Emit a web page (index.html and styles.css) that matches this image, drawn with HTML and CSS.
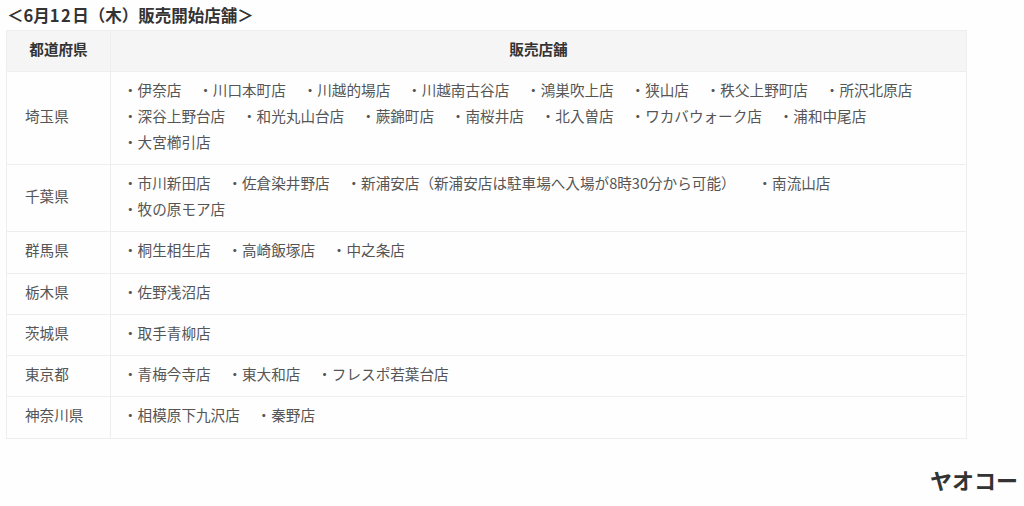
FILE: index.html
```html
<!DOCTYPE html>
<html lang="ja">
<head>
<meta charset="utf-8">
<title>6月12日（木）販売開始店舗</title>
<link rel="stylesheet" href="styles.css">
</head>
<body>
<main class="page">
  <h2 class="title">＜6月<span class="num">12</span>日（木）販売開始店舗＞</h2>
  <table class="stores">
    <thead>
      <tr><th class="pref-col">都道府県</th><th>販売店舗</th></tr>
    </thead>
    <tbody>
      <tr><td>埼玉県</td><td>・伊奈店　 ・川口本町店　 ・川越的場店　 ・川越南古谷店　 ・鴻巣吹上店　 ・狭山店　 ・秩父上野町店　 ・所沢北原店<br>・深谷上野台店　 ・和光丸山台店　 ・蕨錦町店　 ・南桜井店　 ・北入曽店　 ・ワカバウォーク店　 ・浦和中尾店<br>・大宮櫛引店</td></tr>
      <tr><td>千葉県</td><td>・市川新田店　 ・佐倉染井野店　 ・新浦安店（新浦安店は駐車場へ入場が8時30分から可能）<span class="gap"></span>　 ・南流山店<br>・牧の原モア店</td></tr>
      <tr class="tall"><td>群馬県</td><td>・桐生相生店　 ・高崎飯塚店　 ・中之条店</td></tr>
      <tr><td>栃木県</td><td>・佐野浅沼店</td></tr>
      <tr><td>茨城県</td><td>・取手青柳店</td></tr>
      <tr><td>東京都</td><td>・青梅今寺店　 ・東大和店　 ・フレスポ若葉台店</td></tr>
      <tr class="tall"><td>神奈川県</td><td>・相模原下九沢店　 ・秦野店</td></tr>
    </tbody>
  </table>
  <p class="brand">ヤオコー</p>
</main>
</body>
</html>
```
FILE: styles.css
```css
html, body {
  margin: 0;
  background: #fefefe;
}
body {
  font-family: "Noto Sans CJK JP", "Noto Sans", sans-serif;
  color: #555;
  font-size: 14.6px;
  overflow: hidden;
}
.page {
  display: flex;
  flex-direction: column;
  padding: 3px 6px 0;
}
.title {
  margin: 0 0 3px;
  padding-left: 1px;
  font-size: 16.5px;
  line-height: 24px;
  font-weight: 700;
  color: #333;
}
.num { letter-spacing: 1.5px; }
.stores {
  width: 961px;
  border-collapse: collapse;
  border: 1px solid #eee;
}
.stores th, .stores td {
  border: 1px solid #eee;
  line-height: 26px;
  padding: 5px 14px 9px;
  text-align: left;
}
.stores .tall td { padding-bottom: 10px; }
.stores th {
  background: #f5f5f5;
  color: #333;
  font-weight: 700;
  text-align: center;
}
.stores td:first-child {
  padding-left: 18px;
  padding-right: 8px;
  white-space: nowrap;
}
.pref-col { width: 75px; }
.stores td:last-child {
  padding-left: 12px;
  word-spacing: -1px;
}
.gap {
  display: inline-block;
  width: 5px;
}
.brand {
  margin: 22px 0 0;
  text-align: right;
  font-size: 22px;
  line-height: 36px;
  font-weight: 700;
  color: #333;
}
```
